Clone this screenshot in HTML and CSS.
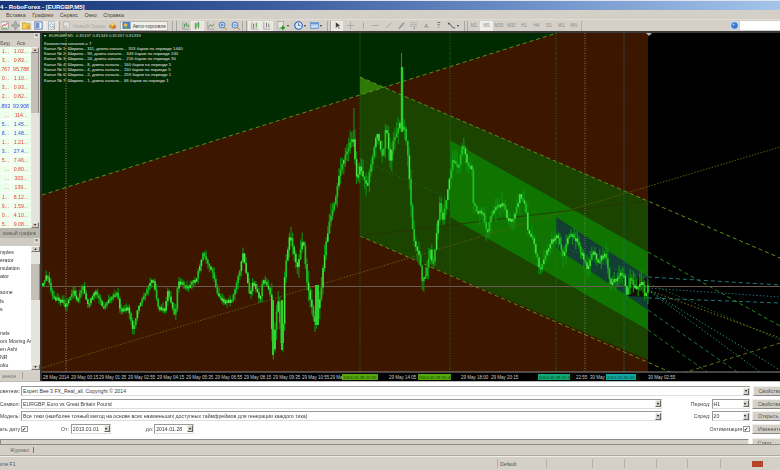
FILE: index.html
```html
<!DOCTYPE html>
<html lang="ru">
<head>
<meta charset="utf-8">
<title>RoboForex - [EURGBP,M5]</title>
<link rel="stylesheet" href="styles.css">
</head>
<body>
<div class="app">
  <header class="titlebar"><span class="title-text">4 - RoboForex - [EURGBP,M5]</span></header>
  <nav class="menubar">
    <span class="menu-item m1">Вставка</span><span class="menu-item">Графики</span><span class="menu-item">Сервис</span><span class="menu-item">Окно</span><span class="menu-item">Справка</span>
  </nav>
  <div class="toolbar">
    <span class="tool t-a"><svg class="ic" viewBox="0 0 10 10"><rect x="0" y="1" width="8" height="8" fill="#f4f4f4" stroke="#888" stroke-width=".7"/><path d="M1 7l2-3 2 1 2-3" stroke="#d33" fill="none"/><path d="M1 8h6" stroke="#3a3"/></svg></span>
    <span class="tool t-b"><svg class="ic" viewBox="0 0 10 10"><path d="M5 0l1.500 3.500 3.500 1.500-3.500 1.500-1.500 3.500-1.500-3.500-3.500-1.500 3.500-1.500z" fill="#a8b4a8" stroke="#778" stroke-width=".5"/></svg></span>
    <span class="tool on"><svg class="ic" viewBox="0 0 10 10"><path d="M0 2h4l1 1h4v6h-9z" fill="#f2cd58" stroke="#a88420" stroke-width=".6"/><circle cx="7" cy="7" r="2" fill="#e8a030"/></svg></span>
    <span class="tool on"><svg class="ic" viewBox="0 0 10 10"><rect x="1" y="1" width="8" height="8" fill="#fff" stroke="#5070b8"/><rect x="2" y="2" width="4" height="6" fill="#7090d0"/></svg></span>
    <span class="tool on"><svg class="ic" viewBox="0 0 10 10"><rect x="1.500" y="1" width="7" height="8" fill="#fff" stroke="#8898a8" stroke-width=".7"/><circle cx="5" cy="5" r="2" fill="none" stroke="#5a7a9a" stroke-width=".7"/><path d="M6.500 6.500l2 2" stroke="#c09030"/></svg></span>
    <span class="sep"></span>
    <span class="tool narrow"><svg class="ic" viewBox="0 0 10 10"><rect x="2" y="1" width="6" height="8" fill="#e6e6e2" stroke="#a8a8a4" stroke-width=".7"/><circle cx="4" cy="7" r="2.300" fill="#c4c8c0"/></svg></span>
    <span class="order-label">Новый Ордер</span>
    <span class="tool ord"><svg class="ic" viewBox="0 0 10 10"><path d="M1 6l4-4 4 4-4 3z" fill="#e0a030" stroke="#906818" stroke-width=".5"/><circle cx="5" cy="3.500" r="1.800" fill="#f4d060"/><circle cx="7" cy="7" r="1.300" fill="#d05030"/></svg></span>
    <span class="auto-btn"><svg class="ic" viewBox="0 0 10 10"><rect x="0.500" y="1" width="9" height="8" rx="1" fill="#4a80c8"/><circle cx="4" cy="4.500" r="2" fill="#f0c040"/><path d="M4 6l4 2.500h-6z" fill="#60b040"/></svg><span>Авто-торговля</span></span>
    <span class="grip g-a"></span>
    <span class="tool"><svg class="ic" viewBox="0 0 10 10"><path d="M2 1v8h7" stroke="#889" fill="none" stroke-width=".7"/><path d="M4 3v4M6 2v4M8 4v3" stroke="#3c8a3c"/></svg></span>
    <span class="tool on"><svg class="ic" viewBox="0 0 10 10"><path d="M3 2v7M6 1v7" stroke="#35703a"/><rect x="2" y="3" width="2" height="4" fill="#4caf50"/><rect x="5" y="2" width="2" height="4" fill="#4caf50"/></svg></span>
    <span class="tool"><svg class="ic" viewBox="0 0 10 10"><path d="M2 1v8h7" stroke="#889" fill="none" stroke-width=".7"/><path d="M3 7l2-3 2 2 2-3" stroke="#4a7a4a" fill="none" stroke-width=".8"/></svg></span>
    <span class="tool"><svg class="ic" viewBox="0 0 10 10"><circle cx="4.500" cy="4.500" r="3.300" fill="#c4dcf2" stroke="#4a78b8"/><path d="M2.800 4.500h3.400M4.500 2.800v3.400" stroke="#2a58a8" stroke-width=".7"/><path d="M7 7l2.500 2.500" stroke="#c09030" stroke-width="1.200"/></svg></span>
    <span class="tool"><svg class="ic" viewBox="0 0 10 10"><circle cx="4.500" cy="4.500" r="3.300" fill="#c4dcf2" stroke="#4a78b8"/><path d="M2.800 4.500h3.400" stroke="#2a58a8" stroke-width=".7"/><path d="M7 7l2.500 2.500" stroke="#c09030" stroke-width="1.200"/></svg></span>
    <span class="grip g-b"></span>
    <span class="tool on"><svg class="ic" viewBox="0 0 10 10"><path d="M2 1v8h7" stroke="#889" fill="none" stroke-width=".7"/><path d="M4 3v5M7 2v5" stroke="#3c8a3c"/></svg></span>
    <span class="tool on"><svg class="ic" viewBox="0 0 10 10"><path d="M2 1v8h7" stroke="#889" fill="none" stroke-width=".7"/><path d="M5 2v5M7.500 3v4" stroke="#6a7a6a"/></svg></span>
    <span class="tool-sm-gap"></span>
    <span class="tool wide"><svg class="ic" viewBox="0 0 10 10"><rect x="1" y="0.500" width="6" height="8" fill="#e8e8e0" stroke="#889" stroke-width=".6"/><path d="M6.500 5v5M4 7.500h5" stroke="#2aa02a" stroke-width="1.800"/></svg><i class="drop"></i></span>
    <span class="tool wide"><svg class="ic" viewBox="0 0 10 10"><circle cx="5" cy="5" r="4.200" fill="#dfe8f4" stroke="#2a68c0" stroke-width="1.300"/><path d="M5 2.500v2.500h2" stroke="#234" fill="none" stroke-width=".7"/></svg><i class="drop"></i></span>
    <span class="tool wide"><svg class="ic" viewBox="0 0 10 10"><rect x="0.500" y="1.500" width="9" height="7" fill="#b8d0ee" stroke="#5080c0" stroke-width=".7"/><path d="M1 3h8" stroke="#4a80d0"/><path d="M2 6h3M6 6h2" stroke="#e0e8f4"/></svg><i class="drop"></i></span>
    <span class="grip g-c"></span>
    <span class="tool on cursor"><svg class="ic" viewBox="0 0 10 10"><path d="M3 1v7l2-2 1.500 3 1-.5-1.500-3h2.500z" fill="#333" stroke="#fff" stroke-width=".4"/></svg></span>
    <span class="tool cross"><svg class="ic" viewBox="0 0 10 10"><path d="M5 1v8M1 5h8" stroke="#a8a8a4"/></svg></span>
    <span class="tool"><svg class="ic" viewBox="0 0 10 10"><path d="M5 1.500v7" stroke="#a0a09c"/></svg></span>
    <span class="tool"><svg class="ic" viewBox="0 0 10 10"><path d="M1.500 5h7" stroke="#a0a09c"/></svg></span>
    <span class="tool"><svg class="ic" viewBox="0 0 10 10"><path d="M2 8l6-6" stroke="#a0a09c"/></svg></span>
    <span class="tool"><svg class="ic" viewBox="0 0 10 10"><path d="M1 8l5-6h3l-5 6z" fill="#b0b0ac"/><path d="M2 9l6-7" stroke="#8a8a86"/></svg></span>
    <span class="tool"><svg class="ic" viewBox="0 0 10 10"><path d="M1 2h8M1 4h8M1 6h8" stroke="#b0b0ac"/><path d="M6 7v2.500" stroke="#8a8a86"/></svg></span>
    <span class="tool glyph">A</span>
    <span class="tool glyph boxed">T</span>
    <span class="tool wide"><svg class="ic" viewBox="0 0 10 10"><path d="M1 2l3 2 2 3 3 1" stroke="#555" fill="none"/><circle cx="2" cy="3" r="1" fill="#555"/></svg><i class="drop"></i></span>
    <span class="grip g-d"></span>
    <span class="tf">M1</span><span class="tf on">M5</span><span class="tf">M15</span><span class="tf">M30</span><span class="tf">H1</span><span class="tf">H4</span><span class="tf">D1</span><span class="tf">W1</span><span class="tf">MN</span>
    <span class="divider"></span>
    <span class="search-wrap"><svg class="ic" viewBox="0 0 10 10"><rect x="0" y="0" width="10" height="10" fill="#d0d8e4"/><circle cx="5" cy="5" r="3.600" fill="#3a78d0"/><circle cx="4" cy="4" r="1.200" fill="#9cc4f0"/></svg><span class="search"></span></span>
  </div>
  <main class="main">
    <aside class="side">
      <div class="pane-head"><span class="x-box">×</span></div>
      <div class="col-head"><span class="ch">Бид</span><span class="ch">Аск</span></div>
      <div class="watch">
        <div class="quotes">
          <div class="q"><span>1...</span><span>1.02...</span></div>
          <div class="q"><span>3...</span><span>0.83...</span></div>
          <div class="q"><span>.767</span><span>95.788</span></div>
          <div class="q"><span>0...</span><span>1.10...</span></div>
          <div class="q"><span>3...</span><span>0.93...</span></div>
          <div class="q"><span>2...</span><span>0.82...</span></div>
          <div class="q up"><span>.893</span><span>93.908</span></div>
          <div class="q"><span>...</span><span>114...</span></div>
          <div class="q up"><span>5...</span><span>1.45...</span></div>
          <div class="q up"><span>8...</span><span>1.48...</span></div>
          <div class="q"><span>1...</span><span>1.21...</span></div>
          <div class="q up"><span>3...</span><span>27.4...</span></div>
          <div class="q"><span>5...</span><span>7.46...</span></div>
          <div class="q"><span>...</span><span>0.80...</span></div>
          <div class="q"><span>...</span><span>303...</span></div>
          <div class="q"><span>...</span><span>139...</span></div>
          <div class="q"><span>1...</span><span>8.12...</span></div>
          <div class="q"><span>9...</span><span>1.59...</span></div>
          <div class="q"><span>0...</span><span>4.10...</span></div>
          <div class="q"><span>5...</span><span>9.08...</span></div>
        </div>
        <div class="vscroll"><span class="sb-btn">▲</span><span class="sb-thumb thumb-a"></span><span class="sb-space"></span><span class="sb-btn">▼</span></div>
      </div>
      <div class="side-tab"><span>ковый график</span></div>
      <div class="pane-head nav-head"><span class="x-box">×</span></div>
      <div class="nav">
        <ul class="nav-list">
          <li>mples</li><li>erator</li><li>mulation</li><li>ator</li><li>&nbsp;</li><li>some</li><li>ls</li><li>s</li><li>&nbsp;</li><li>&nbsp;</li><li>nels</li><li>om Moving Av</li><li>en Ashi</li><li>NR</li><li>oku</li>
        </ul>
        <div class="vscroll nav-scroll"><span class="sb-btn">▲</span><span class="sb-gap"></span><span class="sb-thumb thumb-b"></span><span class="sb-space"></span><span class="sb-btn">▼</span></div>
      </div>
      <div class="side-foot"><span>анное</span><i class="foot-sep"></i></div>
    </aside>
    <section class="chart">
      <svg id="plot" class="plot" viewBox="42 33 738 348" width="738" height="348" xmlns="http://www.w3.org/2000/svg">
        <rect x="42" y="33" width="606" height="339" fill="#3d1600"/>
        <rect x="648" y="33" width="132" height="339" fill="#000"/>
        <polygon points="42,33 557,33 42,195" fill="#002a00"/>
        <polygon points="360,77 648,201 648,360 360,236" fill="#1a4400"/>
        <polygon points="360,77 384,87.500 360,95" fill="#2f7a06"/>
        <polygon points="450,140 648,252 648,330 450,217" fill="#0f7500"/>
        <polygon points="556,217 648,277 648,310 556,248" fill="#123f33"/>
        <polygon points="627,276 648,279 648,297 627,296" fill="#141200"/>
        <g fill="none" stroke-width="1">
          <path d="M42 195L557 33" stroke="#5f8f1a" stroke-dasharray="4 3"/>
          <path d="M42 368L780 147" stroke="#5f5c10" stroke-dasharray="1.500 1.500"/>
          <path d="M360 77L780 258" stroke="#5f8f1a" stroke-dasharray="4 3"/>
          <path d="M360 236L670 372" stroke="#5f8f1a" stroke-dasharray="4 3"/>
          <path d="M683 373L780 343" stroke="#6d6a10" stroke-dasharray="4 3"/>
          <path d="M360 160L648 283L780 340" stroke="#1a6a1a" stroke-dasharray="1.500 2"/>
          <path d="M360 236L648 201" stroke="#2c3200" stroke-width=".8"/>
          <path d="M648 252L780 326" stroke="#2a8a20" stroke-dasharray="4 3"/>
          <path d="M648 330L707 372" stroke="#1f7a20" stroke-dasharray="4 3"/>
          <path d="M648 310L737 372" stroke="#1f7a40" stroke-dasharray="4 3"/>
          <path d="M648 277L780 285" stroke="#1f7a78" stroke-dasharray="4 3"/>
          <path d="M648 298L780 303" stroke="#1f7a78" stroke-dasharray="4 3"/>
          <path d="M648 288L780 297" stroke="#1f6a78" stroke-dasharray="1.500 2"/>
          <path d="M648 290L760 372" stroke="#1f8a60" stroke-dasharray="1.500 2"/>
          <path d="M648 290L780 370" stroke="#1f8a60" stroke-dasharray="1.500 2"/>
          <path d="M648 290L780 338" stroke="#7d7a10" stroke-dasharray="1.500 2"/>
          <path d="M66 33V372" stroke="#a08a6a" stroke-dasharray="1 1.500"/>
          <path d="M360 33V372" stroke="#22702a" stroke-dasharray="1 1.500"/>
          <path d="M450 33V372" stroke="#22702a" stroke-dasharray="1 1.500"/>
          <path d="M556 33V372" stroke="#1f7a1f" stroke-dasharray="1 1.500"/>
          <path d="M585 33V372" stroke="#7a7a66" stroke-dasharray="1 1.500"/>
          <path d="M624 33V372" stroke="#1a7a78" stroke-dasharray="1 1.500"/>
          <path d="M42 286.500H780" stroke="#6a5a50"/>
        </g>
        <g id="candles"></g>
        <path d="M646 33h6l-3 3z" fill="#b4b4b4"/>
        <rect x="42" y="372" width="738" height="9" fill="#000"/>
        <path d="M42 372H780" stroke="#8a8a8a" stroke-width="1"/>
        <g class="axis-boxes">
          <rect x="342" y="374" width="36" height="6" fill="#55a80a"/>
          <rect x="418" y="374" width="33" height="6" fill="#55a80a"/>
          <rect x="538" y="374" width="32" height="6" fill="#10a878"/>
          <rect x="606" y="374" width="30" height="6" fill="#10a8a8"/>
        </g>
        <g class="axis">
          <text x="43" y="379">28 May 2014</text>
          <text x="71" y="379">29 May 00:15</text>
          <text x="99" y="379">29 May 01:35</text>
          <text x="128" y="379">29 May 02:55</text>
          <text x="157" y="379">29 May 04:15</text>
          <text x="186" y="379">29 May 05:35</text>
          <text x="215" y="379">29 May 06:55</text>
          <text x="244" y="379">29 May 08:15</text>
          <text x="273" y="379">29 May 09:35</text>
          <text x="302" y="379">29 May 10:55</text>
          <text x="330" y="379">29 Ma</text>
          <text x="343" y="379" class="boxed-label">2014.05.29 12:15</text>
          <text x="389" y="379">29 May 14:05</text>
          <text x="419" y="379" class="boxed-label">2014.05.29 15:45</text>
          <text x="461" y="379">29 May 18:00</text>
          <text x="491" y="379">29 May 20:15</text>
          <text x="539" y="379" class="boxed-label">2014.05.29 21:40</text>
          <text x="576" y="379">22:55</text>
          <text x="590" y="379">30 May</text>
          <text x="607" y="379" class="boxed-label">2014.05.30 01:20</text>
          <text x="648" y="379">30 May 02:55</text>
        </g>
      </svg>
      <div class="overlay">
        <div class="sym"><span class="sym-arrow">▾</span>EURGBP,M5  0.81337 0.81349 0.81337 0.81339</div>
        <div class="ln">Количество каналов = 7</div>
        <div class="ln">Канал № 1: Ширина - 311, длина канала -  353 баров на периоде 1440</div>
        <div class="ln">Канал № 2: Ширина - 99, длина канала -  343 баров на периоде 240</div>
        <div class="ln">Канал № 3: Ширина - 24, длина канала -  216 баров на периоде 30</div>
        <div class="ln">Канал № 4: Ширина - 8, длина канала -  160 баров на периоде 5</div>
        <div class="ln">Канал № 5: Ширина - 4, длина канала -  110 баров на периоде 5</div>
        <div class="ln">Канал № 6: Ширина - 2, длина канала -  259 баров на периоде 1</div>
        <div class="ln">Канал № 7: Ширина - 1, длина канала -  66 баров на периоде 1</div>
      </div>
    </section>
  </main>
  <section class="tester">
    <div class="row">
      <label class="lbl">Советник:</label>
      <div class="combo grow"><span>Expert Bee 3 FX_Real_all. Copyright © 2014</span><i class="arrow"></i></div>
      <button class="btn">Свойства</button>
    </div>
    <div class="row">
      <label class="lbl">Символ:</label>
      <div class="combo long"><span>EURGBP, Euro vs Great Britain Pound</span><i class="arrow"></i></div>
      <label class="lbl-r">Период:</label>
      <div class="combo small"><span>H1</span><i class="arrow"></i></div>
      <button class="btn">Свойства</button>
    </div>
    <div class="row">
      <label class="lbl">Модель:</label>
      <div class="combo long"><span>Все тики (наиболее точный метод на основе всех наименьших доступных таймфреймов для генерации каждого тика)</span><i class="arrow"></i></div>
      <label class="lbl-r">Спред:</label>
      <div class="combo small"><span>20</span><i class="arrow"></i></div>
      <button class="btn">Открыть</button>
    </div>
    <div class="row">
      <label class="lbl">вать дату</label>
      <span class="check">✔</span>
      <label class="date-lbl from">От:</label>
      <div class="combo date"><span>2013.01.01</span><i class="arrow"></i></div>
      <label class="date-lbl to">до:</label>
      <div class="combo date"><span>2014.01.28</span><i class="arrow"></i></div>
      <label class="lbl-r">Оптимизация</label>
      <span class="check opt">✔</span>
      <button class="btn">Изменить</button>
    </div>
    <div class="row last">
      <div class="progress"></div>
      <button class="btn">Старт</button>
    </div>
  </section>
  <div class="tabs"><span class="tab">Журнал</span><i class="tab-sep"></i></div>
  <footer class="status">
    <span class="st st-help"><span>ите F1</span></span>
    <span class="st st-def">Default</span>
    <span class="st w47"></span><span class="st w32"></span><span class="st w32"></span><span class="st w31"></span><span class="st w33"></span>
    <span class="st st-conn"><i class="conn"></i></span>
  </footer>
</div>
<script src="script.js"></script>
</body>
</html>
```
FILE: styles.css
```css
* { box-sizing: border-box; }
html, body { margin: 0; padding: 0; width: 780px; height: 470px; overflow: hidden; background: #d4d0c8; }
.app { width: 780px; height: 470px; display: flex; flex-direction: column; font-family: "Liberation Sans", Arial, sans-serif; font-size: 5.2px; color: #333; filter: blur(.35px); overflow: hidden; }

.titlebar { height: 10px; flex: none; padding-top: 2px; background: linear-gradient(90deg, #16357a 0%, #3c5c9e 35%, #6a8cc4 65%, #a4c4ea 100%); border-top: 1px solid #dfe6f0; display: flex; align-items: center; }
.title-text { color: #fff; font-size: 6px; font-weight: 700; white-space: nowrap; }

.menubar { height: 9px; flex: none; display: flex; align-items: center; padding-left: 6px; gap: 6.500px; color: #444; font-size: 5.300px; background: #d4d0c8; }

.toolbar { height: 12px; flex: none; display: flex; align-items: center; background: #d4d0c8; padding-left: 1px; border-top: 1px solid #e0ddd5; overflow: hidden; }
.ic { width: 9px; height: 9px; display: block; flex: none; }
.tool { width: 12.600px; height: 10px; flex: none; display: flex; align-items: center; justify-content: center; }
.tool.t-a { width: 9px; }
.tool.t-b { width: 10px; }
.tool.on { background: #e8e5de; box-shadow: inset 0 0 0 1px #f0eee8; }
.tool.narrow { width: 10px; }
.tool.ord { width: 13px; }
.tool.wide { width: 16.500px; gap: 0; }
.tool.cursor { width: 12px; }
.tool.cross { width: 13.500px; }
.tool.glyph { font-size: 6px; color: #777; }
.tool.boxed { font-size: 5px; text-decoration: overline; }
.drop { width: 0; height: 0; border-left: 1.500px solid transparent; border-right: 1.500px solid transparent; border-top: 2px solid #333; margin-left: 1px; flex: none; }
.sep { width: 2px; height: 10px; margin: 0 1px; border-left: 1px solid #b0ada5; flex: none; }
.order-label { width: 33px; flex: none; color: #a6a6a2; font-size: 5.200px; white-space: nowrap; margin-left: 1px; overflow: hidden; }
.auto-btn { width: 48px; height: 10px; flex: none; margin-left: 1px; display: flex; align-items: center; gap: 2px; padding-left: 1px; background: #f1efe9; border: 1px solid #bbb8b0; font-size: 5px; color: #444; white-space: nowrap; overflow: hidden; }
.grip { height: 10px; flex: none; border-left: 1px solid #a8a59d; border-right: 1px solid #a8a59d; }
.g-a { width: 5px; margin: 0 2px 0 4px; }
.g-b { width: 5px; margin: 0 1px 0 0; }
.g-c { width: 4px; margin: 0 0 0 3px; }
.g-d { width: 4px; margin: 0 0 0 2px; }
.tool-sm-gap { width: 2px; flex: none; }
.tf { width: 12.500px; height: 10px; flex: none; display: flex; align-items: center; justify-content: center; font-size: 4.600px; color: #8d8d88; }
.tf.on { background: #efede8; }
.divider { width: 1px; height: 10px; flex: none; background: #b4b1a9; margin-left: 1px; }
.search-wrap { margin-left: auto; display: flex; align-items: center; gap: 1px; flex: none; }
.search { width: 40px; height: 9px; background: #fff; display: block; }

.main { flex: none; height: 350px; display: flex; border-top: 2px solid #3a3a3a; }
.side { width: 40px; flex: none; display: flex; flex-direction: column; background: #d4d0c8; overflow: hidden; }
.pane-head { height: 6px; flex: none; display: flex; justify-content: flex-end; padding-right: 1px; background: #cfcbc2; }
.nav-head { height: 8px; }
.x-box { width: 5px; height: 5px; font-size: 6px; line-height: 5px; text-align: center; color: #222; background: #e4e1da; }
.col-head { height: 8px; flex: none; display: flex; gap: 1px; background: #d4d0c8; color: #555; }
.ch { text-align: center; line-height: 8px; }
.ch:first-child { width: 10px; }
.ch:last-child { width: 20px; }
.watch { height: 181px; flex: none; display: flex; overflow: hidden; }
.quotes { width: 31px; flex: none; overflow: hidden; background: #fff; }
.q { height: 9.100px; display: flex; gap: 1px; color: #f23b3b; border-bottom: 1px solid #fff; }
.q span { background: #ebffeb; line-height: 8px; overflow: hidden; white-space: nowrap; text-align: right; }
.q span:first-child { width: 10px; padding-right: 1px; }
.q span:last-child { flex: 1; text-align: center; }
.q.up { color: #3a48ee; }
.vscroll { width: 8px; flex: none; display: flex; flex-direction: column; background: #e6e3dd; padding-top: 0; }
.sb-btn { height: 6px; flex: none; background: #d4d0c8; border: 1px solid #f0eee8; border-right-color: #777; border-bottom-color: #777; font-size: 3.500px; line-height: 4px; text-align: center; color: #111; }
.sb-thumb { flex: none; background: #c4c0b8; border-right: 1px solid #8a8880; }
.thumb-a { height: 60px; }
.thumb-b { height: 36px; }
.sb-gap { height: 12px; flex: none; }
.sb-space { flex: 1; }
.side-tab { height: 10px; flex: none; display: flex; align-items: center; padding-left: 3px; background: #b9b6ae; color: #5e5e5a; white-space: nowrap; overflow: hidden; }
.nav { height: 124px; flex: none; display: flex; background: #fff; }
.nav-list { margin: 0; padding: 2px 0 0; list-style: none; width: 31px; flex: none; overflow: hidden; white-space: nowrap; color: #333; }
.nav-list li { height: 8.100px; line-height: 8.100px; }
.nav-scroll { width: 9px; }
.side-foot { flex: 1; display: flex; align-items: center; padding-left: 2px; gap: 3px; color: #777; }
.foot-sep { width: 1px; height: 7px; margin-left: 3px; background: #a8a59d; }

.chart { width: 740px; flex: none; position: relative; border-left: 2px solid #333; background: #000; overflow: hidden; }
.plot { display: block; }
.axis text { font-family: "Liberation Sans", Arial, sans-serif; font-size: 4.500px; fill: #cfcfcf; }
.axis text.boxed-label { fill: #0c3a0c; font-size: 4.300px; }
.overlay { position: absolute; left: 2px; top: 0; color: #e8e8e8; font-size: 4.250px; }
.overlay .ln { height: 5.300px; line-height: 5.300px; white-space: pre; }
.overlay .sym { color: #d8d8d8; height: 7.500px; line-height: 6.500px; white-space: pre; }
.sym-arrow { display: inline-block; width: 5px; font-size: 4px; color: #eee; }

.tester { height: 64px; flex: none; background: #fff; padding-top: 4px; display: flex; flex-direction: column; gap: 2.600px; border-bottom: 1px solid #8c8a84; border-top: 1px solid #bbb; overflow: hidden; }
.row { height: 10px; flex: none; display: flex; align-items: center; width: 800px; font-size: 5.200px; color: #444; }
.row.last { height: 8px; margin-top: 3px; }
.lbl { width: 20px; flex: none; display: flex; justify-content: flex-end; overflow: hidden; white-space: nowrap; margin-right: 1px; }
.lbl-r { flex: 1; display: flex; justify-content: flex-end; white-space: nowrap; margin-right: 1px; }
.combo { height: 10px; flex: none; display: flex; align-items: center; justify-content: space-between; background: #fff; border: 1px solid #9a9892; border-right-color: #ddd; border-bottom-color: #ddd; border-top-width: 1.500px; padding-left: 1px; overflow: hidden; white-space: nowrap; color: #3a3a3a; }
.combo.grow { width: 729px; }
.combo.long { width: 641px; }
.combo.small { width: 38px; }
.combo.date { width: 40px; }
.arrow { width: 6px; height: 7px; flex: none; background: #d4d0c8; border: 1px solid #f2f0ea; border-right-color: #666; border-bottom-color: #666; position: relative; }
.arrow::after { content: ""; position: absolute; left: 0.500px; top: 1.500px; border-left: 1.500px solid transparent; border-right: 1.500px solid transparent; border-top: 2px solid #111; }
.btn { margin: 0 0 0 2.500px; width: 48px; height: 10px; flex: none; font: inherit; font-size: 5.200px; color: #555; background: #d4d0c8; border: 1px solid #efede8; border-right-color: #888; border-bottom-color: #888; padding: 0 0 0 5px; text-align: left; }
.check { width: 6.500px; height: 6.500px; flex: none; border: 1px solid #999; font-size: 5px; line-height: 4.500px; text-align: center; color: #222; background: #fff; }
.date-lbl { flex: none; white-space: nowrap; }
.date-lbl.from { margin: 0 2px 0 33.500px; }
.date-lbl.to { margin: 0 1px 0 35px; }
.progress { width: 749px; height: 8px; flex: none; background: #d4d0c8; border: 1px solid #8d8b85; border-right-color: #eee; border-bottom-color: #eee; }

.tabs { height: 11px; flex: none; display: flex; align-items: center; padding-left: 10px; gap: 4px; color: #66665f; background: #d4d0c8; border-bottom: 1px solid #aeaba3; }
.tab-sep { width: 1px; height: 6px; background: #77756f; }

.status { flex: 1; display: flex; align-items: center; background: #d4d0c8; color: #555; border-top: 1px solid #efede7; }
.st { height: 9px; flex: none; display: flex; align-items: center; border-right: 1px solid #b4b1a9; overflow: hidden; white-space: nowrap; }
.st-help { width: 498px; }
.st-def { width: 49px; padding-left: 2px; }
.w47 { width: 46px; }
.w32 { width: 32px; }
.w31 { width: 31px; }
.w33 { width: 33px; }
.st-conn { border: 0; padding-left: 31px; }
.conn { width: 11px; height: 6px; background: #b4452a; display: block; }
```
FILE: script.js
```js
(function () {
  var keys = [[42,287],[47,273],[53,298],[63,300],[65,308],[73,290],[77,300],[83,287],[88,305],[95,290],[103,307],[117,292],[120,310],[128,308],[133,330],[138,307],[153,278],[158,307],[165,310],[168,290],[175,318],[178,280],[187,287],[197,277],[203,253],[213,273],[217,293],[225,302],[232,299],[240,270],[243,253],[250,297],[253,280],[260,300],[263,278],[270,290],[273,353],[278,298],[282,350],[285,267],[290,233],[297,270],[303,237],[307,283],[315,323],[320,300],[325,250],[330,220],[335,200],[340,170],[348,150],[353,135],[357,183],[360,165],[367,187],[377,133],[383,157],[386,125],[390,163],[393,143],[400,123],[405,130],[408,157],[410,187],[413,237],[420,260],[422,283],[427,270],[430,250],[433,267],[440,203],[443,220],[450,177],[453,157],[458,170],[463,143],[467,163],[472,170],[473,203],[478,213],[482,210],[487,233],[493,210],[503,203],[507,217],[513,220],[520,195],[525,203],[528,230],[533,240],[540,270],[547,250],[552,240],[558,235],[563,257],[570,232],[577,242],[583,257],[588,270],[593,250],[598,263],[605,252],[610,283],[617,278],[623,272],[627,295],[630,278],[637,290],[642,280],[645,298],[648,283]];
  function yAt(x) {
    for (var i = 1; i < keys.length; i++) {
      if (x <= keys[i][0]) {
        var a = keys[i - 1], b = keys[i];
        return a[1] + (b[1] - a[1]) * (x - a[0]) / (b[0] - a[0]);
      }
    }
    return keys[keys.length - 1][1];
  }
  var seed = 12345;
  function rnd() { seed = (seed * 1664525 + 1013904223) % 4294967296; return seed / 4294967296; }
  var wick = "", body = "", light = "";
  var prev = yAt(43);
  for (var x = 43; x < 648; x += 1.6) {
    var amp = x > 270 ? 2 : 1.2;
    var y = yAt(x) + (rnd() - 0.5) * amp * 2;
    var hi = Math.min(prev, y), lo = Math.max(prev, y);
    var reach = x > 270 ? 12 : 6;
    var w1 = rnd() * reach, w2 = rnd() * reach;
    wick += "M" + x.toFixed(1) + " " + (hi - w1).toFixed(1) + "V" + (lo + w2).toFixed(1);
    var bb = Math.max(lo, hi + 3);
    var seg = "M" + x.toFixed(1) + " " + hi.toFixed(1) + "V" + bb.toFixed(1);
    body += seg;
    if (rnd() > 0.55) light += seg;
    prev = y;
  }
  function add(d, color, width) {
    var p = document.createElementNS("http://www.w3.org/2000/svg", "path");
    p.setAttribute("d", d);
    p.setAttribute("stroke", color);
    p.setAttribute("stroke-width", width);
    p.setAttribute("fill", "none");
    document.getElementById("candles").appendChild(p);
  }
  add(wick, "#0f8a10", 1.2);
  add(body, "#1fc01f", 1.7);
  add(light, "#5cec50", 0.9);
  add("M401.500 53V70", "#1a9a1a", 1);
  add("M402 67V132", "#2cd02c", 2.4);
  add("M317 285V325", "#2cd02c", 4);
  add("M354 108V140", "#0f8a10", 1.2);
  add("M273 300V355 M282 300V350", "#2cd02c", 2);
})();
```
